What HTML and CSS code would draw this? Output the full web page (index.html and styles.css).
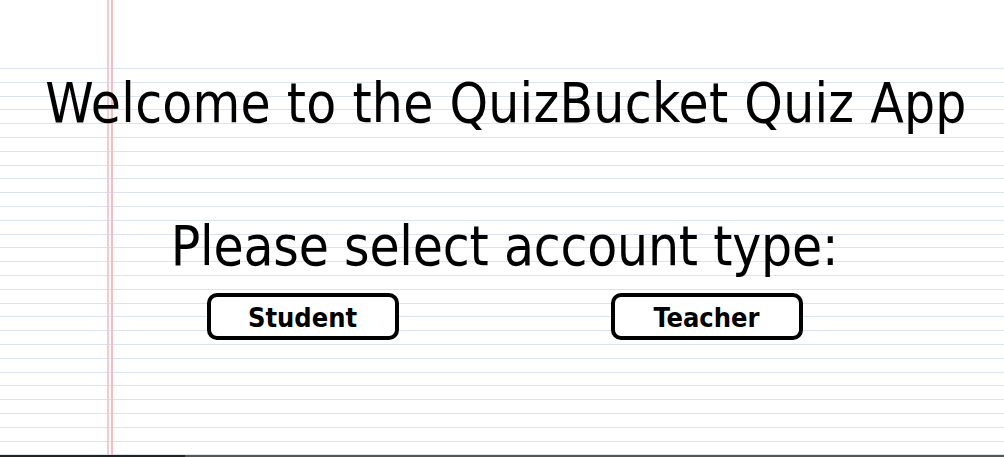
FILE: index.html
```html
<!DOCTYPE html>
<html lang="en">
<head>
<meta charset="utf-8">
<title>QuizBucket</title>
<link rel="stylesheet" href="styles.css">
</head>
<body>
<main class="paper">
  <h1 class="title">Welcome to the QuizBucket Quiz App</h1>
  <h2 class="subtitle">Please select account type:</h2>
  <div class="choices">
    <button class="choice" type="button">Student</button>
    <button class="choice" type="button">Teacher</button>
  </div>
</main>
<div class="bottom-strip"></div>
</body>
</html>
```
FILE: styles.css
```css
html, body {
  margin: 0;
  padding: 0;
}
body {
  width: 1004px;
  height: 457px;
  overflow: hidden;
  font-family: "DejaVu Sans Condensed", "DejaVu Sans", sans-serif;
  font-stretch: condensed;
  color: #000;
  background: #fff;
}
.paper {
  height: 455px;
  box-sizing: border-box;
  padding-top: 71px;
  display: flex;
  flex-direction: column;
  align-items: center;
  background-image:
    linear-gradient(to right, transparent 107px, #f4cbd0 107px, #f4cbd0 109px, transparent 109px, transparent 111px, #f0bfc6 111px, #f0bfc6 113px, transparent 113px),
    linear-gradient(to bottom, #fff 0, #fff 68px, transparent 68px),
    repeating-linear-gradient(to bottom, #dae3ee 0, #dae3ee 1px, transparent 1px, transparent 13.8px);
  background-position: 0 0, 0 0, 0 68px;
}
.title,
.subtitle {
  margin: 0;
  font-size: 54.5px;
  line-height: 64px;
  font-weight: normal;
  white-space: nowrap;
}
.title {
  letter-spacing: 0.25px;
  margin-left: 8px;
}
.subtitle {
  margin-top: 79px;
  letter-spacing: -0.2px;
  margin-left: 5px;
}
.choices {
  margin-top: 15px;
  display: flex;
  gap: 212px;
  margin-left: 5px;
}
.choice {
  width: 192px;
  height: 47px;
  box-sizing: border-box;
  border: 4px solid #000;
  border-radius: 10px;
  background: #fff;
  padding: 3px 0 0;
  font-family: inherit;
  font-stretch: condensed;
  font-size: 27px;
  line-height: 36px;
  font-weight: bold;
  color: #000;
}
.bottom-strip {
  height: 2px;
  background: linear-gradient(to right, #222 0, #222 185px, #555 185px);
}
```
